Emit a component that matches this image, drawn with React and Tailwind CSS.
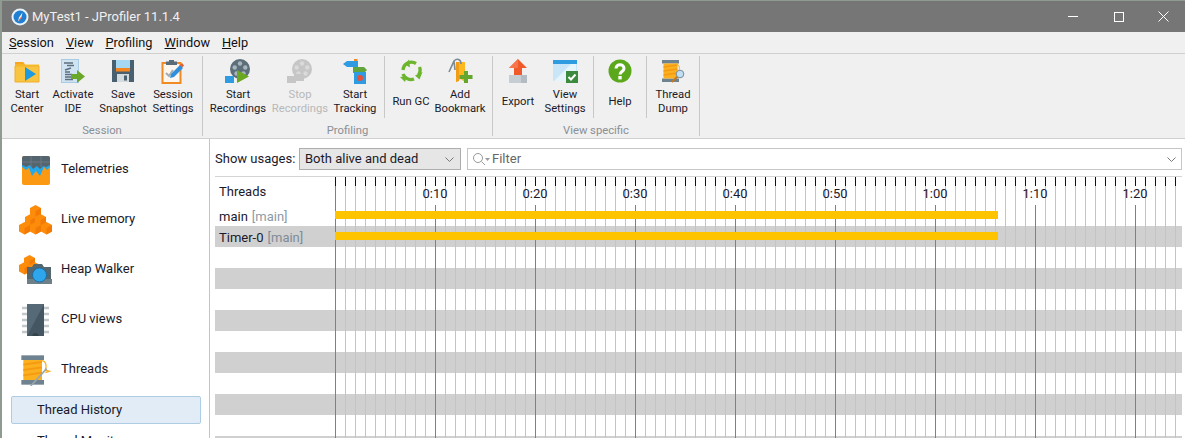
import React from 'react';

const font = "font-['Roboto','Noto_Sans',sans-serif]";

// Toolbar icons, all drawn on a 24x24 box
const FolderIcon = () => (
  <svg width="26" height="24" viewBox="0 0 26 24">
    <path d="M1 3h8l2 2.5h14V23H1z" fill="#fbc02d" />
    <path d="M1 3h8l2 2.5H1z" fill="#f5a623" />
    <path d="M1 7h24v16H1z" fill="#f9c440" stroke="#eeb02a" />
    <path d="M11 8l11 7-11 7z" fill="#1e9be0" />
  </svg>
);

const IdeIcon = () => (
  <svg width="24" height="24" viewBox="0 0 24 24">
    <rect x="0.5" y="0.5" width="17" height="23" fill="#cfe3f3" stroke="#a9cbe4" />
    <path d="M3 4h9M6 6.5h7M10 9l-6 2M4 13h5M4 15.5h7M4 18h9M4 20.5h8" stroke="#5d6f7c" strokeWidth="1.6" fill="none" />
    <path d="M10 15h6v-4l8 6.5-8 6.5v-4h-6z" fill="#6aa82a" />
  </svg>
);

const SaveIcon = () => (
  <svg width="24" height="24" viewBox="0 0 24 24">
    <rect x="1" y="1" width="22" height="22" fill="#48606f" />
    <rect x="5" y="1" width="14" height="10" fill="#a5d8f3" />
    <rect x="5" y="9" width="14" height="3.5" fill="#f5861f" />
    <rect x="6" y="15" width="12" height="8" fill="#d5dadd" />
    <rect x="13" y="16.5" width="3" height="5" fill="#48606f" />
  </svg>
);

const SettingsIcon = () => (
  <svg width="24" height="25" viewBox="0 0 24 25">
    <rect x="1.5" y="4" width="18" height="20" fill="#fdf6ee" stroke="#f08a24" strokeWidth="2" />
    <path d="M5 2.5h11V6H5z" fill="#5b6d79" />
    <path d="M8 1h5v2H8z" fill="#5b6d79" />
    <path d="M5 14l3 3 4-6" stroke="#a4adb3" strokeWidth="2" fill="none" />
    <path d="M9 19l1-4 9-9 3 3-9 9z" fill="#2f8fdc" />
    <path d="M19 6l2-2 2 2.5-2 2z" fill="#ea5a34" />
  </svg>
);

const ReelIcon = ({ gray }) => (
  <svg width="26" height="25" viewBox="0 0 26 25">
    <circle cx="15" cy="10" r="10" fill={gray ? '#c6c6c6' : '#5c6e79'} />
    <circle cx="15" cy="4.5" r="2.2" fill={gray ? '#dadada' : '#a9b5bc'} />
    <circle cx="9.7" cy="8.5" r="2.2" fill={gray ? '#dadada' : '#a9b5bc'} />
    <circle cx="20.3" cy="8.5" r="2.2" fill={gray ? '#dadada' : '#a9b5bc'} />
    <circle cx="11.5" cy="14.5" r="2.2" fill={gray ? '#dadada' : '#a9b5bc'} />
    <circle cx="18.5" cy="14.5" r="2.2" fill={gray ? '#dadada' : '#a9b5bc'} />
    <rect x="0" y="17" width="9" height="7" fill={gray ? '#c6c6c6' : '#2f9be0'} />
    {gray ? (
      <rect x="7" y="15" width="10" height="7" fill="#c6c6c6" />
    ) : (
      <path d="M12 11l12 6.5L12 24z" fill="#6aa821" />
    )}
  </svg>
);

const TrackingIcon = () => (
  <svg width="24" height="25" viewBox="0 0 24 25">
    <rect x="11" y="0" width="3.5" height="25" fill="#f08a24" />
    <path d="M0 5l4-3h11v6H4z" fill="#2f9be0" />
    <path d="M10 8h11l3 3-3 3H10z" fill="#62a53a" />
    <rect x="11" y="13" width="12" height="12" fill="#2f9be0" />
    <circle cx="17" cy="19" r="3" fill="#e8503a" />
  </svg>
);

const GcIcon = () => (
  <svg width="24" height="24" viewBox="0 0 24 24">
    <path d="M4 11A8.5 8.5 0 0 1 17 4.5" stroke="#6cb52d" strokeWidth="3.4" fill="none" />
    <path d="M10 0.5l1 8-5-3z" fill="#6cb52d" />
    <path d="M20.5 8A8.5 8.5 0 0 1 19.5 16" stroke="#6cb52d" strokeWidth="3.4" fill="none" />
    <path d="M23.5 13l-3 7.5-4.5-4z" fill="#6cb52d" />
    <path d="M15 20A8.5 8.5 0 0 1 4 15" stroke="#6cb52d" strokeWidth="3.4" fill="none" />
    <path d="M1 18l7-1-2 6z" fill="#6cb52d" />
  </svg>
);

const BookmarkIcon = () => (
  <svg width="25" height="26" viewBox="0 0 25 26">
    <path d="M8 4h9v20l-4.500-3-4.500 3z" fill="#fbb81f" />
    <path d="M8 4h3v19l-3 1z" fill="#f09c16" />
    <path d="M13 6C13 1 9 0 6 3L1 14M6 3l1 9" stroke="#7b8a94" strokeWidth="1.6" fill="none" />
    <path d="M16 13h4v4h4.500v4H20v4h-4v-4h-4.500v-4H16z" fill="#65a62c" />
  </svg>
);

const ExportIcon = () => (
  <svg width="20" height="25" viewBox="0 0 20 25">
    <path d="M10 0l9 9h-5v7H6V9H1z" fill="#f05a2b" />
    <path d="M6 9h4V0L1 9z" fill="#f5764a" />
    <rect x="1" y="16" width="18" height="8" fill="#c6ced3" />
    <rect x="13" y="16" width="6" height="8" fill="#b2bcc2" />
  </svg>
);

const ViewIcon = () => (
  <svg width="25" height="24" viewBox="0 0 25 24">
    <rect x="0" y="2" width="24" height="20" fill="#c9e6f8" />
    <path d="M1 22L18 5h5v17z" fill="#e6f4fc" />
    <rect x="0" y="1" width="24" height="4" fill="#2f9be0" />
    <rect x="13" y="12" width="12" height="12" fill="#3b8a3e" />
    <path d="M15.500 18l2.500 2.500 4.500-5" stroke="#fff" strokeWidth="2" fill="none" />
  </svg>
);

const HelpIcon = () => (
  <svg width="24" height="24" viewBox="0 0 24 24">
    <circle cx="12" cy="12" r="11.500" fill="#5ca81c" />
    <path d="M8 9.500c0-5 8-5 8 0 0 3-4 3-4 6" stroke="#fff" strokeWidth="3" fill="none" />
    <rect x="10.300" y="17" width="3.400" height="3.400" fill="#fff" />
  </svg>
);

const SpoolIcon = ({ size = 24, glass }) => (
  <svg width={size} height={size} viewBox="0 0 24 24">
    <rect x="1" y="1" width="17" height="3.500" fill="#6f8290" />
    <rect x="1" y="19.500" width="17" height="3.500" fill="#6f8290" />
    <rect x="2.500" y="4.500" width="14" height="15" fill="#fbb01f" />
    <path d="M2.500 8l14-2M2.500 12l14-2M2.500 16l14-2" stroke="#f59a12" strokeWidth="1.400" />
    {glass ? (
      <>
        <path d="M15 5c3 0 4 3 3 7" stroke="#fbb01f" strokeWidth="1" fill="none" />
        <path d="M11 23l6-6" stroke="#c47a1c" strokeWidth="1.800" />
        <circle cx="19" cy="15" r="3.800" fill="#bfe0f4" stroke="#7b8a94" />
      </>
    ) : (
      <>
        <path d="M16 5c4 0 4 5 3 7l3 1-3 1" stroke="#fbb01f" strokeWidth="1" fill="none" />
        <path d="M8 24l12-13" stroke="#9aa6ae" strokeWidth="1.200" />
      </>
    )}
  </svg>
);

// Sidebar icons
const TelemetriesIcon = () => (
  <svg width="30" height="30" viewBox="0 0 30 30">
    <rect x="1" y="1" width="28" height="29" rx="2" fill="#fb9a12" />
    <path d="M1 12l4 3 3-2 3 8 4-5 4 5 4-9 3 3 3-3V8H1z" fill="#25a8ea" />
    <path d="M1 3a2 2 0 0 1 2-2h24a2 2 0 0 1 2 2v7l-4 2-3-1-3 3-3-3-4 3-3-4-4 2-4-2z" fill="#55656f" />
    <path d="M10 1v11M20 1v11M1 7h28" stroke="#6f7f89" strokeWidth="0.800" />
  </svg>
);

const Cube = ({ x, y }) => (
  <g transform={`translate(${x} ${y})`}>
    <path d="M5.500 0L11 3v6.500L5.500 12.500 0 9.500V3z" fill="#fd8c0a" />
    <path d="M5.500 6L11 3v6.500L5.500 12.500z" fill="#f47a06" />
  </g>
);

const MemoryIcon = () => (
  <svg width="33" height="30" viewBox="0 0 33 30">
    <Cube x="11" y="0" />
    <Cube x="6" y="9" />
    <Cube x="16" y="9" />
    <Cube x="0" y="17" />
    <Cube x="11" y="17" />
    <Cube x="22" y="17" />
  </svg>
);

const HeapIcon = () => (
  <svg width="33" height="30" viewBox="0 0 33 30">
    <Cube x="5" y="0" />
    <Cube x="0" y="7" />
    <Cube x="10" y="7" />
    <path d="M8 12h5l2-3h8l2 3h7v17H8z" fill="#54666f" />
    <rect x="8" y="24" width="25" height="5" fill="#6d7f89" />
    <circle cx="20.500" cy="20" r="7" fill="#2ea6ee" stroke="#1d6ea3" />
  </svg>
);

const CpuIcon = () => (
  <svg width="27" height="32" viewBox="0 0 27 32">
    <path d="M0 4h27M0 10h27M0 16h27M0 22h27M0 28h27" stroke="#c0c8cc" strokeWidth="2.500" />
    <rect x="5" y="0" width="17" height="32" fill="#566976" />
    <path d="M22 0v32H5z" fill="#445661" />
    <circle cx="13.500" cy="32" r="3" fill="#33424b" />
  </svg>
);

const toolGroups = [
  {
    label: 'Session',
    width: 'w-[201px]',
    pad: 'pl-[1px]',
    buttons: [
      { icon: <FolderIcon />, lines: ['Start', 'Center'], w: 'w-[48px]' },
      { icon: <IdeIcon />, lines: ['Activate', 'IDE'], w: 'w-[44px]' },
      { icon: <SaveIcon />, lines: ['Save', 'Snapshot'], w: 'w-[56px]' },
      { icon: <SettingsIcon />, lines: ['Session', 'Settings'], w: 'w-[44px]' },
    ],
  },
  {
    label: 'Profiling',
    width: 'w-[290px]',
    pad: 'pl-[7px]',
    buttons: [
      { icon: <ReelIcon />, lines: ['Start', 'Recordings'], w: 'w-[56px]' },
      { icon: <ReelIcon gray />, lines: ['Stop', 'Recordings'], w: 'w-[68px]', disabled: true },
      { icon: <TrackingIcon />, lines: ['Start', 'Tracking'], w: 'w-[42px]' },
      { sep: 'ml-[8px]' },
      { icon: <GcIcon />, lines: ['Run GC'], w: 'w-[52px]' },
      { icon: <BookmarkIcon />, lines: ['Add', 'Bookmark'], w: 'w-[46px]' },
    ],
  },
  {
    label: 'View specific',
    width: 'w-[207px]',
    pad: 'pl-[1px]',
    buttons: [
      { icon: <ExportIcon />, lines: ['Export'], w: 'w-[48px]' },
      { icon: <ViewIcon />, lines: ['View', 'Settings'], w: 'w-[46px]' },
      { sep: 'ml-[5px]' },
      { icon: <HelpIcon />, lines: ['Help'], w: 'w-[52px]' },
      { sep: 'ml-0' },
      { icon: <SpoolIcon glass />, lines: ['Thread', 'Dump'], w: 'w-[52px]' },
    ],
  },
];

const navItems = [
  { icon: <TelemetriesIcon />, label: 'Telemetries' },
  { icon: <MemoryIcon />, label: 'Live memory' },
  { icon: <HeapIcon />, label: 'Heap Walker' },
  { icon: <CpuIcon />, label: 'CPU views' },
  { icon: <SpoolIcon size={32} />, label: 'Threads' },
];

const menus = [
  ['S', 'ession'],
  ['V', 'iew'],
  ['P', 'rofiling'],
  ['W', 'indow'],
  ['H', 'elp'],
];

const timeLabels = ['0:10', '0:20', '0:30', '0:40', '0:50', '1:00', '1:10', '1:20'];
const ticks = Array.from({ length: 85 }, (_, i) => i);
const emptyRows = Array.from({ length: 10 }, (_, i) => i);

const ToolButton = ({ icon, lines, w, disabled }) => (
  <div className={`${w} h-[62px] shrink-0 flex flex-col items-center`}>
    <div className="h-[30px] flex items-center justify-center">{icon}</div>
    <div className={`flex-1 flex flex-col justify-center items-center text-[11.25px] leading-[14px] text-center whitespace-nowrap ${disabled ? 'text-[#b8b8b8]' : 'text-[#1a1a2a]'}`}>
      {lines.map((line) => (
        <span key={line}>{line}</span>
      ))}
    </div>
  </div>
);

// Time axis: ticks, grid lines and the two thread bars
const Timeline = () => (
  <svg className="absolute left-[120px] top-0" width="847" height="261" viewBox="0 0 847 261">
    {ticks.map((i) => {
      const x = i * 10 + 0.5;
      const major = i % 10 === 0;
      return (
        <g key={i}>
          <line x1={x} x2={x} y1="0" y2="9" stroke="#111" />
          <line
            x1={x}
            x2={x}
            y1={major && i > 0 ? 28 : 9}
            y2="261"
            stroke={major ? '#808080' : '#c4c4c4'}
          />
        </g>
      );
    })}
    <rect x="0" y="34" width="663" height="8" fill="#ffc400" />
    <rect x="0" y="55" width="663" height="8" fill="#ffc400" />
  </svg>
);

export default function App() {
  return (
    <div className={`${font} w-[1185px] h-[438px] overflow-hidden bg-[#8f9a90] pl-[2px] pt-[1px] flex flex-col text-[13px] text-[#1a1a2a]`}>
      {/* Title bar */}
      <div className="h-[31px] shrink-0 bg-[#767676] flex items-center text-white pl-[9px]">
        <svg width="18" height="18" viewBox="0 0 18 18">
          <circle cx="9" cy="9" r="8.500" fill="#e8f3fb" />
          <circle cx="9" cy="9" r="6.500" fill="#1f7fd0" />
          <path d="M11.500 4.500L8 9.500l-1 4 3-3z" fill="#fff" />
          <path d="M9.500 9l-2.500 4.500 3-3z" fill="#e8503a" />
        </svg>
        <span className="ml-[3px] text-[13px] text-[#f0f0f0]">MyTest1 - JProfiler 11.1.4</span>
        <div className="ml-auto flex items-center">
          <div className="w-[46px] flex justify-center">
            <div className="w-[10px] h-px bg-white" />
          </div>
          <div className="w-[45px] flex justify-center">
            <div className="w-[10px] h-[10px] border border-white" />
          </div>
          <div className="w-[44px] flex justify-center">
            <svg width="11" height="11" viewBox="0 0 11 11">
              <path d="M0.500 0.500l10 10M10.500 0.500l-10 10" stroke="#fff" fill="none" />
            </svg>
          </div>
        </div>
      </div>

      {/* Menu bar */}
      <div className="h-[22px] shrink-0 bg-[#f0f0f0] border-b border-[#d0d0d0] flex items-center gap-[12px] pl-[7px] text-[12.75px] text-[#111]">
        {menus.map(([key, rest]) => (
          <span key={rest}>
            <span className="underline">{key}</span>
            {rest}
          </span>
        ))}
      </div>

      {/* Toolbar */}
      <div className="h-[85px] shrink-0 bg-[#f0f0f0] border-b border-[#d0d0d0] flex pt-[2px]">
        {toolGroups.map((group) => (
          <div key={group.label} className={`${group.width} shrink-0 border-r border-[#c8c8c8] flex flex-col mb-[2px]`}>
            <div className={`${group.pad} flex h-[62px]`}>
              {group.buttons.map((b, i) =>
                b.sep ? (
                  <div key={i} className={`${b.sep} w-px h-[62px] bg-[#c8c8c8] shrink-0`} />
                ) : (
                  <ToolButton key={b.lines.join()} {...b} />
                )
              )}
            </div>
            <div className="flex-1 flex items-center justify-center pt-[5px] text-[11.25px] text-[#8a8f96]">{group.label}</div>
          </div>
        ))}
      </div>

      {/* Body */}
      <div className="flex-1 min-h-0 bg-white flex">
        <div className="w-[208px] shrink-0 border-r border-[#c4c4c4] pl-[9px] pt-[5px] flex flex-col">
          {navItems.map((item) => (
            <div key={item.label} className="h-[50px] shrink-0 flex items-center">
              <div className="w-[50px] flex justify-center pr-[1px] mt-[1px] shrink-0">{item.icon}</div>
              <span>{item.label}</span>
            </div>
          ))}
          <div className="mt-[2px] h-[28px] w-[190px] shrink-0 flex items-center pl-[25px] bg-[#e1ecf6] border border-[#aecde4] rounded-[2px]">
            Thread History
          </div>
          <div className="mt-[7px] pl-[26px]">Thread Monitor</div>
        </div>

        <div className="flex-1 min-w-0 pl-[5px] pr-[3px]">
          {/* Filter row */}
          <div className="h-[38px] flex items-center border-b border-[#d4d4d4] pt-[3px]">
            <span className="w-[84px] shrink-0">Show usages:</span>
            <div className="w-[162px] h-[22px] shrink-0 bg-[#e6e6e6] border border-[#adadad] flex items-center justify-between pl-[5px] pr-[6px]">
              <span>Both alive and dead</span>
              <svg width="9" height="5" viewBox="0 0 9 5">
                <path d="M0.500 0.500l4 4 4-4" stroke="#777" fill="none" />
              </svg>
            </div>
            <div className="ml-[6px] flex-1 h-[22px] bg-white border border-[#c6c6c6] flex items-center pl-[4px] pr-[5px] text-[#666]">
              <svg width="20" height="14" viewBox="0 0 20 14">
                <circle cx="6" cy="6" r="4.500" stroke="#9a9a9a" fill="none" />
                <path d="M9.500 9.500l3.500 3.500" stroke="#9a9a9a" />
                <path d="M13 6h5l-2.500 3z" fill="#9a9a9a" />
              </svg>
              <span>Filter</span>
              <svg className="ml-auto" width="9" height="5" viewBox="0 0 9 5">
                <path d="M0.500 0.500l4 4 4-4" stroke="#777" fill="none" />
              </svg>
            </div>
          </div>

          {/* Threads chart */}
          <div className="relative h-[261px] overflow-hidden">
            <div className="h-[28px] flex items-center pl-[4px] pt-[1px]">Threads</div>
            <div className="h-[21px] flex items-center pl-[4px] pt-[2px]">
              main <span className="ml-[4px] text-[#8c9aa6]">[main]</span>
            </div>
            <div className="h-[21px] flex items-center pl-[4px] pt-[2px] bg-[#d0d0d0]">
              Timer-0 <span className="ml-[4px] text-[#7f8c98]">[main]</span>
            </div>
            {emptyRows.map((i) => (
              <div key={i} className={`h-[21px] ${i % 2 === 1 ? 'bg-[#d0d0d0]' : ''}`} />
            ))}
            <Timeline />
            <div className="absolute left-[120px] top-[7px] flex">
              <div className="w-[50px]" />
              {timeLabels.map((t) => (
                <div key={t} className="w-[100px] h-[17px] flex justify-center">
                  <span>{t}</span>
                </div>
              ))}
            </div>
          </div>
        </div>
      </div>
    </div>
  );
}
